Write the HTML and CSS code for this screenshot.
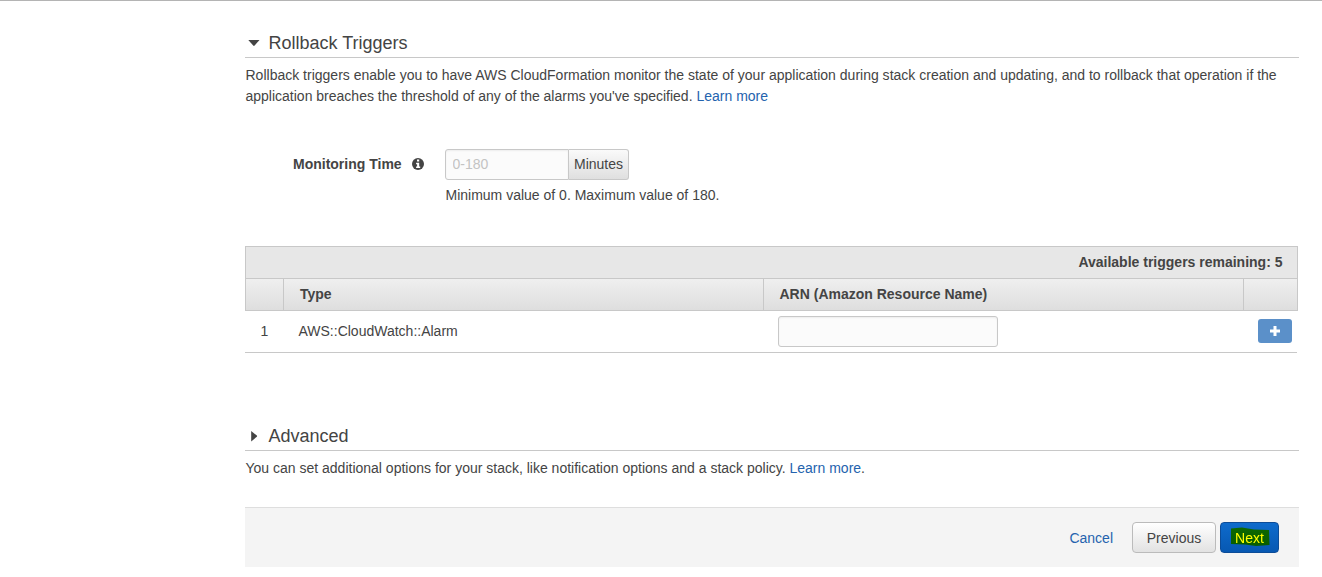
FILE: index.html
```html
<!DOCTYPE html>
<html lang="en">
<head>
<meta charset="utf-8">
<title>Create stack - Options</title>
<link rel="stylesheet" href="styles.css">
</head>
<body>
<main class="content">
  <section class="section">
    <h2 class="section-title"><svg class="caret" width="12" height="12" viewBox="0 0 12 12"><path d="M0.3 2h11.2L6.6 7.6q-.7.6-1.4 0z"/></svg><span>Rollback Triggers</span></h2>
    <p class="description"><span class="line-one">Rollback triggers enable you to have AWS CloudFormation monitor the state of your application during stack creation and updating, and to rollback that operation if the</span><br>application breaches the threshold of any of the alarms you've specified. <a class="link" href="#">Learn more</a></p>
  </section>

  <div class="form-row">
    <label class="form-label" for="time">Monitoring Time</label>
    <svg class="info" width="12" height="12" viewBox="0 0 12 12"><circle cx="6" cy="6" r="6"/><path d="M5 1.6h2.2v1.9H5zM4.1 4.7h3.1v3.9h1v1.5H4.1V8.6h1V6.2h-1z"/></svg>
    <div class="form-field">
      <div class="input-group">
        <input class="input time-input" id="time" placeholder="0-180"><span class="addon">Minutes</span>
      </div>
      <div class="hint">Minimum value of 0. Maximum value of 180.</div>
    </div>
  </div>

  <div class="triggers">
    <div class="triggers-bar"><span>Available triggers remaining: 5</span></div>
    <div class="triggers-grid triggers-head">
      <div class="cell"></div><div class="cell cell-type">Type</div><div class="cell cell-arn">ARN (Amazon Resource Name)</div><div class="cell"></div>
    </div>
    <div class="triggers-grid triggers-row">
      <div class="row-number">1</div><div class="row-type">AWS::CloudWatch::Alarm</div><div class="row-arn"><input class="input arn-input" aria-label="ARN"></div>
      <div class="row-action"><button class="add" aria-label="Add trigger"><svg width="10" height="10" viewBox="0 0 10 10"><path d="M3.5 0h3v3.5H10v3H6.5V10h-3V6.5H0v-3h3.5z"/></svg></button></div>
    </div>
  </div>

  <section class="section section-advanced">
    <h2 class="section-title"><svg class="caret" width="12" height="12" viewBox="0 0 12 12"><path d="M3.2 0v10.4L8.8 5.8q.6-.6 0-1.2z"/></svg><span>Advanced</span></h2>
    <p class="description">You can set additional options for your stack, like notification options and a stack policy. <a class="link" href="#">Learn more</a>.</p>
  </section>

  <footer class="actions">
    <a class="link cancel" href="#">Cancel</a>
    <button class="button previous">Previous</button>
    <button class="button next">Next<svg class="marker" width="41" height="20" viewBox="0 0 41 20"><path d="M1 1.5L12 .5 24 2.5 39 3 39.5 18 26 19 15 17.5 1 17z"/></svg></button>
  </footer>
</main>
</body>
</html>
```
FILE: styles.css
```css
* { box-sizing: border-box; }

body {
  margin: 0;
  border-top: 1px solid #b4b4b4;
  background: #fff;
  color: #444;
  font: 14px/21px "Liberation Sans", Arial, sans-serif;
}

.content { width: 1054px; margin-left: 245px; padding-top: 27px; }

.section-title {
  display: flex;
  align-items: center;
  height: 30px;
  margin: 0;
  padding: 2px 0 0 3px;
  border-bottom: 1px solid #c8c8c8;
  font-size: 18px;
  font-weight: normal;
}
.caret { margin-right: 8.5px; fill: #444; }
.description { margin: 0; padding: 7px 0 0 .5px; white-space: nowrap; }
.line-one { letter-spacing: .003px; }
.link { color: #2463ae; text-decoration: none; }

.form-row { display: flex; height: 97px; margin-top: 42px; padding-left: 48px; }
.form-label { width: 119px; padding-top: 5px; font-weight: bold; }
.info { margin-top: 9px; fill: #444; }
.info path { fill: #fff; }
.form-field { margin-left: 21px; }
.input-group { display: flex; height: 31px; }
.input {
  height: 31px;
  padding: 0 6px;
  border: 1px solid #c8c8c8;
  border-radius: 3px;
  background: #fbfbfb;
  box-shadow: inset 0 1px 2px rgba(0, 0, 0, .06);
  font: inherit;
}
.input::placeholder { color: #c3c3c3; opacity: 1; }
.time-input { width: 124px; padding-bottom: 2px; padding-left: 6.5px; border-radius: 3px 0 0 3px; }
.addon {
  width: 61px;
  padding: 4px 0 0 5px;
  border: 1px solid #c8c8c8;
  border-left: 0;
  border-radius: 0 3px 3px 0;
  background: linear-gradient(#fafafa, #dfdfdf);
}
.input-group .addon { width: 60px; }
.hint { padding: 5px 0 0 .5px; white-space: nowrap; }

.triggers { width: 1053px; }
.triggers-bar {
  height: 33px;
  padding: 5px 14.5px 0;
  border: 1px solid #c8c8c8;
  background: #e7e7e7;
  font-weight: bold;
  text-align: right;
}
.triggers-grid { display: grid; grid-template-columns: 38px 480px 480px 55px; }
.triggers-head {
  height: 32px;
  border-bottom: 1px solid #c8c8c8;
  background: linear-gradient(#efefef, #dedede);
  font-weight: bold;
}
.cell { padding-top: 5px; border-left: 1px solid #c8c8c8; }
.cell:last-child { border-right: 1px solid #c8c8c8; }
.cell-type { padding-left: 16px; }
.cell-arn { padding-left: 15.5px; }
.triggers-row { width: 1052px; height: 42px; align-items: center; border-bottom: 1px solid #c8c8c8; }
.row-number { padding-left: 1px; text-align: center; }
.row-type { padding-left: 15.5px; }
.row-arn { display: flex; padding-left: 15px; }
.arn-input { width: 220px; }
.row-action { display: flex; padding: 0 0 1px 15px; }
.add {
  display: grid;
  place-items: center;
  width: 34px;
  height: 24px;
  padding: 0;
  border: 0;
  border-radius: 3px;
  background: #5b90c9;
}
.add svg { fill: #fff; }

.section-advanced { margin-top: 68px; }

.actions {
  display: flex;
  height: 60px;
  margin-top: 28px;
  padding: 14px 20px 0 0;
  justify-content: flex-end;
  border-top: 1px solid #dedede;
  background: #f4f4f4;
}
.cancel { margin-right: 19px; padding-top: 6px; }
.button {
  height: 31px;
  padding: 2px 0 0;
  border: 1px solid #bbb;
  border-radius: 4px;
  font: inherit;
  line-height: 27px;
}
.previous { width: 84px; margin-right: 4px; background: linear-gradient(#fff, #e2e2e2); color: #444; }
.next {
  position: relative;
  width: 59px;
  border-color: #0c4c98;
  background: linear-gradient(#0e6bcc, #0758b2);
  color: #fff;
  isolation: isolate;
}
/* Highlighter stroke drawn over the button label */
.marker {
  position: absolute;
  left: 8.5px;
  top: 4px;
  fill: #ff0;
  mix-blend-mode: multiply;
}
```
